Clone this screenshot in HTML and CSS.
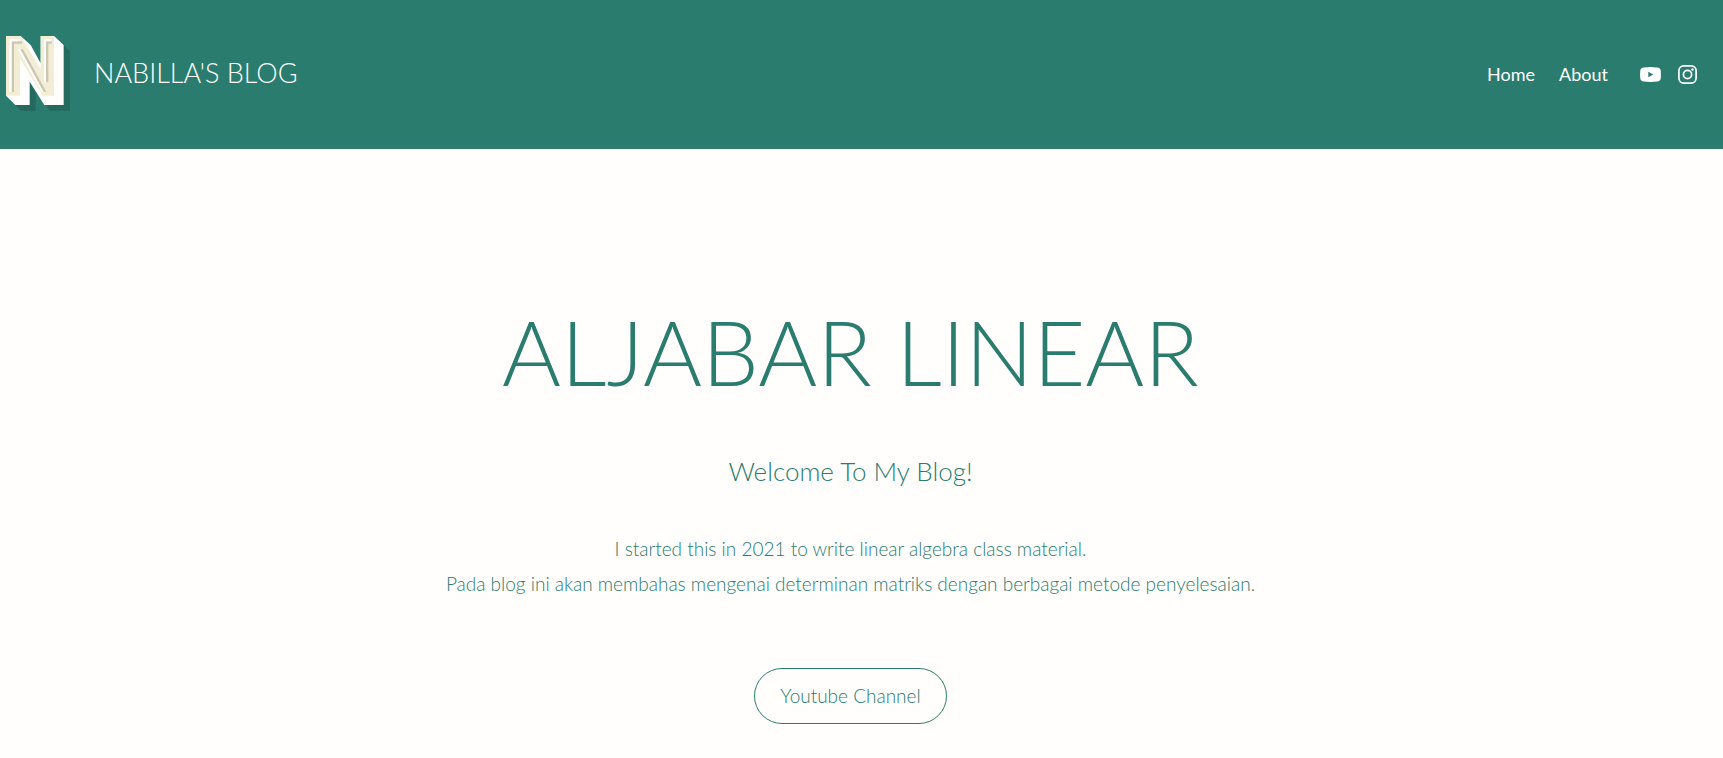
FILE: index.html
```html
<!DOCTYPE html>
<html lang="en">
<head>
<meta charset="utf-8">
<meta name="viewport" content="width=device-width, initial-scale=1">
<title>Nabilla's Blog</title>
<link rel="stylesheet" href="styles.css">
</head>
<body>
<header class="site-header">
  <a class="brand" href="#">
    <svg class="brand-logo" viewBox="18 48 192 225" aria-hidden="true">
      <path fill="#246a5e" d="M180 66L191 75L210 95V273H150L107 205V273H62L46 255V180H180Z"/>
      <path fill="#fffefd" d="M18 48H62L92 75L122 130V48H162L191 75V255H133L89 185V255H46L18 227Z"/>
      <path fill="#f3edd6" d="M18 48H62L122 148V48H162V227H128L60 116V227H18Z"/>
      <path fill="#cbc7b2" d="M34 64H66V71H42V216H34ZM137 64H155V71H145V186H137ZM60 88H69L139 216H128Z"/>
      <path fill="#fffefd" d="M28 58H62V64H35V216H28ZM132 58H153V64H138V186H132ZM53 88H61L131 216H125Z"/>
    </svg>
    <span class="brand-name">NABILLA'S BLOG</span>
  </a>
  <nav class="site-nav">
    <a class="nav-link" href="#">Home</a>
    <a class="nav-link" href="#">About</a>
  </nav>
  <div class="social">
    <a class="social-link" href="#" aria-label="YouTube">
      <svg class="social-icon" viewBox="0 0 21 21"><path fill="#fff" fill-rule="evenodd" d="M4 3.400Q10.500 2.800 17 3.400Q20.600 3.600 20.800 7Q21 10.500 20.800 14Q20.600 17.400 17 17.600Q10.500 18.200 4 17.600Q.400 17.400 .200 14Q0 10.500 .200 7Q.400 3.600 4 3.400ZM8.300 7.800V13.200L13.200 10.500Z"/></svg>
    </a>
    <a class="social-link" href="#" aria-label="Instagram">
      <svg class="social-icon" viewBox="0 0 21 21" fill="none" stroke="#fff" stroke-width="1.700"><rect x="1.900" y="1.900" width="17.200" height="17.200" rx="4.800"/><circle cx="10.500" cy="10.500" r="4.100"/><circle cx="15.500" cy="5.500" r="1.200" fill="#fff" stroke="none"/></svg>
    </a>
  </div>
</header>
<main class="hero">
  <h1 class="hero-title">ALJABAR LINEAR</h1>
  <h2 class="hero-subtitle">Welcome To My Blog!</h2>
  <p class="hero-text">I started this in 2021 to write linear algebra class material.<br>Pada blog ini akan membahas mengenai determinan matriks dengan berbagai metode penyelesaian.</p>
  <a class="hero-button" href="#">Youtube Channel</a>
</main>
</body>
</html>
```
FILE: styles.css
```css
* {
  box-sizing: border-box;
}

body {
  margin: 0;
  background: #fffefd;
  color: #2a7c6e;
  font-family: Lato, "Open Sans", sans-serif;
  font-weight: 300;
}

a {
  color: inherit;
  text-decoration: none;
}

.site-header {
  display: flex;
  align-items: center;
  padding: 36px 25px 38px 6px;
  background: #2a7c6e;
  color: #fff;
}

.brand {
  display: flex;
  align-items: center;
  gap: 24px;
  margin-right: auto;
}

.brand-logo {
  width: 64px;
  height: 75px;
}

.brand-name {
  padding-bottom: 2px;
  font-size: 27px;
  line-height: 36px;
}

.site-nav {
  display: flex;
  gap: 24px;
  margin-right: 32px;
  font-size: 18px;
  font-weight: 400;
}

.social {
  display: flex;
  gap: 16px;
  padding-top: 2px;
}

.social-icon {
  display: block;
  width: 21px;
  height: 21px;
}

.hero {
  display: flex;
  flex-direction: column;
  align-items: center;
  padding: 148px 22px 32px 0;
  text-align: center;
}

.hero-title {
  margin: 0;
  font-size: 90px;
  font-weight: 300;
  line-height: 108px;
}

.hero-subtitle {
  margin: 48px 0 0;
  font-size: 26px;
  font-weight: 300;
  line-height: 36px;
}

.hero-text {
  margin: 42px 0 0;
  font-size: 19px;
  line-height: 35px;
}

.hero-button {
  margin-top: 67px;
  padding: 12px 25px;
  border: 1px solid #2a7c6e;
  border-radius: 28px;
  font-size: 19px;
  line-height: 30px;
}
```
